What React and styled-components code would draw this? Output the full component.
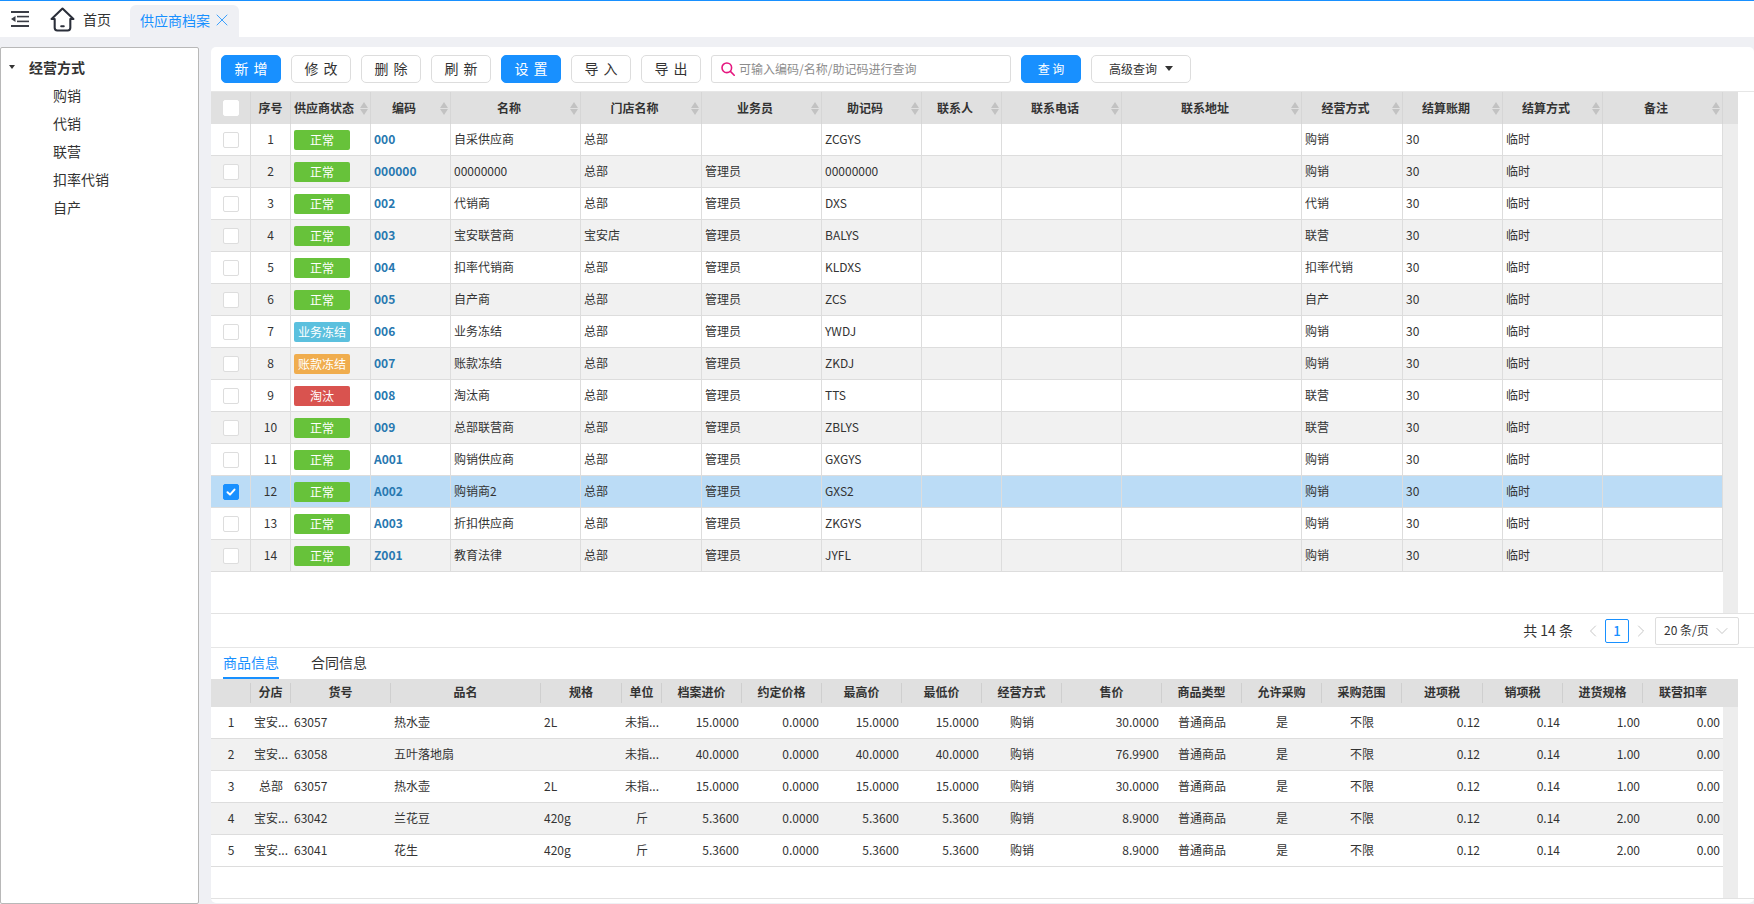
import React from "react";
import styled, { createGlobalStyle } from "styled-components";
import { X, ChevronLeft, ChevronRight, ChevronDown } from "lucide-react";

const GlobalStyle = createGlobalStyle`
  html, body {
    margin: 0;
    padding: 0;
    background: #eff0f4;
    font-family: "Noto Sans CJK SC", "Noto Sans", sans-serif;
    font-size: 12px;
    color: #333;
  }
  * {
    box-sizing: border-box;
  }
`;

// column tracks of both tables
const SUPPLIER_COLS = "40px 40px 80px 80px 130px 121px 120px 100px 80px 120px 180px 101px 100px 100px 120px";
const GOODS_COLS = "40px 40px 100px 150px 81px 40px 80px 80px 80px 80px 80px 100px 80px 80px 80px 81px 80px 80px 80px";

const Page = styled.div`
  width: 1754px;
  height: 904px;
  display: flex;
  flex-direction: column;
  overflow: hidden;
`;

const TopBar = styled.header`
  height: 37px;
  display: flex;
  align-items: center;
  background: #fff;
  border-top: 1px solid #1890ff;
`;

const MenuIcon = styled.svg`
  width: 18px;
  height: 16px;
  margin-left: 11px;
  fill: #3a3d45;
`;

const HomeIcon = styled.svg`
  width: 25px;
  height: 25px;
  margin-left: 21px;
  fill: none;
  stroke: #2b2f3a;
  stroke-width: 2;
  stroke-linejoin: round;
  stroke-linecap: round;
`;

const HomeLabel = styled.span`
  margin-left: 8px;
  font-size: 14px;
  width: 27px;
  white-space: nowrap;
`;

const ActiveTab = styled.div`
  align-self: flex-end;
  width: 109px;
  height: 32px;
  margin-left: 20px;
  padding: 0 0 2px 10px;
  display: flex;
  align-items: center;
  gap: 2px;
  background: #eff0f4;
  border-radius: 6px 6px 0 0;
  color: #1890ff;
  font-size: 14px;
  & > svg {
    flex: none;
  }
`;

const Body = styled.div`
  flex: 1;
  display: flex;
  padding-top: 10px;
  min-height: 0;
`;

const Sidebar = styled.aside`
  width: 199px;
  padding-top: 6px;
  background: #fff;
  border: 1px solid #b8b8b8;
  border-radius: 2px;
`;

const TreeHead = styled.div`
  height: 28px;
  display: flex;
  align-items: center;
  padding: 0 0 2px 8px;
  font-size: 14px;
  font-weight: 700;
  &::before {
    content: "";
    margin-right: 14px;
    border-left: 3.5px solid transparent;
    border-right: 3.5px solid transparent;
    border-top: 4px solid #333;
  }
`;

const TreeItem = styled.div`
  height: 28px;
  line-height: 26px;
  padding-left: 52px;
  font-size: 14px;
`;

const Main = styled.main`
  width: 1543px;
  height: 856px;
  margin-left: 12px;
  padding-top: 8px;
  background: #fff;
  border-radius: 5px;
`;

const Toolbar = styled.div`
  height: 36px;
  padding-left: 10px;
  display: flex;
  align-items: flex-start;
  gap: 10px;
`;

const Button = styled.button`
  width: ${(p) => p.$width || 60}px;
  height: 28px;
  padding: 0 0 2px;
  display: flex;
  align-items: center;
  justify-content: center;
  gap: 8px;
  font-family: inherit;
  font-size: ${(p) => p.$size || 14}px;
  word-spacing: ${(p) => (p.$size ? 0 : 2)}px;
  color: ${(p) => (p.$primary ? "#fff" : "#333")};
  background: ${(p) => (p.$primary ? "#1890ff" : "#fff")};
  border: 1px solid ${(p) => (p.$primary ? "#1890ff" : "#ddd")};
  border-radius: 5px;
  white-space: pre;
`;

const Caret = styled.i`
  border-left: 4px solid transparent;
  border-right: 4px solid transparent;
  border-top: 5px solid #333;
`;

const SearchBox = styled.label`
  width: 300px;
  height: 28px;
  padding-left: 9px;
  display: flex;
  align-items: center;
  gap: 4px;
  border: 1px solid #ddd;
  border-radius: 3px;
`;

const SearchIcon = styled.svg`
  width: 14px;
  height: 14px;
  flex: none;
  fill: none;
  stroke: #e5177f;
  stroke-width: 1.6;
  stroke-linecap: round;
`;

const SearchInput = styled.input`
  flex: 1;
  min-width: 0;
  border: 0;
  outline: 0;
  padding: 0 0 2px;
  font-family: inherit;
  font-size: 12px;
  &::placeholder {
    color: #8c8c8c;
    opacity: 1;
  }
`;

const GridArea = styled.section`
  height: ${(p) => p.$height}px;
  display: flex;
  border-top: ${(p) => (p.$lined ? "1px solid #e6e6e6" : "0")};
  border-bottom: 1px solid #e2e2e2;
`;

const Table = styled.div`
  width: 1512px;
  flex: none;
`;

const Scrollbar = styled.div`
  width: 15px;
  flex: none;
  background: #ededed;
  &::before {
    content: "";
    display: block;
    height: ${(p) => p.$head}px;
    background: #e0e0e0;
  }
`;

const HeadRow = styled.div`
  display: grid;
  grid-template-columns: ${(p) => p.$cols};
  height: ${(p) => p.$height}px;
  background: #e0e0e0;
`;

const SupplierHead = styled.div`
  display: flex;
  align-items: center;
  min-width: 0;
  font-weight: 700;
  border-right: 1px solid #d6d6d6;
`;

const GoodsHead = styled.div`
  display: flex;
  align-items: center;
  justify-content: center;
  font-weight: 700;
  &:not(:last-child) > span {
    border-right: 1px solid #cfcfcf;
  }
  & > span {
    width: 100%;
    height: 20px;
    line-height: 18px;
    text-align: center;
    white-space: nowrap;
  }
`;

const HeadLabel = styled.span`
  flex: 1;
  padding-bottom: 2px;
  text-align: center;
  white-space: nowrap;
`;

const Sorter = styled.i`
  width: 8px;
  margin: 0 2px 0 3px;
  flex: none;
  display: flex;
  flex-direction: column;
  gap: 1px;
  &::before,
  &::after {
    content: "";
    border-left: 4px solid transparent;
    border-right: 4px solid transparent;
  }
  &::before {
    border-bottom: 6px solid #c2c2c2;
  }
  &::after {
    border-top: 6px solid #c2c2c2;
  }
`;

const Row = styled.div`
  display: grid;
  grid-template-columns: ${(p) => p.$cols};
  height: 32px;
  border-bottom: 1px solid #ddd;
  background: ${(p) => (p.$selected ? "#bbdcf6" : p.$striped ? "#f1f1f1" : "#fff")};
`;

const Cell = styled.div`
  display: flex;
  align-items: center;
  justify-content: ${(p) => (p.$align === "center" ? "center" : p.$align === "right" ? "flex-end" : "flex-start")};
  min-width: 0;
  padding: 0 3px 2px;
  white-space: nowrap;
  overflow: hidden;
  border-right: ${(p) => (p.$plain ? "0" : "1px solid #ddd")};
`;

const Code = styled.span`
  font-weight: 700;
  color: #2878b0;
`;

const Checkbox = styled.span`
  width: 16px;
  height: 16px;
  margin-top: 2px;
  display: flex;
  align-items: center;
  justify-content: center;
  background: ${(p) => (p.$checked ? "#1890ff" : "#fff")};
  border: 1px solid ${(p) => (p.$checked ? "#1890ff" : "#ddd")};
  border-radius: 2px;
`;

const HeadCheckbox = styled(Checkbox)`
  margin: 0 auto;
  border-color: #fff;
`;

const CheckMark = styled.svg`
  width: 12px;
  height: 12px;
  fill: none;
  stroke: #fff;
  stroke-width: 2;
  stroke-linecap: round;
  stroke-linejoin: round;
`;

const STATUS_COLORS = {
  正常: "#67c23a",
  业务冻结: "#5bc0de",
  账款冻结: "#f0ad4e",
  淘汰: "#d9534f",
};

const StatusTag = styled.span`
  width: 56px;
  height: 20px;
  margin-top: 2px;
  padding-bottom: 1px;
  flex: none;
  display: flex;
  align-items: center;
  justify-content: center;
  color: #fff;
  background: ${(p) => STATUS_COLORS[p.$status]};
  border-radius: 2px;
`;

const Pager = styled.div`
  height: 34px;
  padding-right: 15px;
  display: flex;
  align-items: center;
  justify-content: flex-end;
  border-bottom: 1px solid #e6e6e6;
  font-size: 14px;
`;

const Total = styled.span`
  margin-right: 14px;
  padding-bottom: 2px;
`;

const PageArrow = styled.span`
  width: 12px;
  display: flex;
  justify-content: center;
  color: #bbb;
  & > svg {
    flex: none;
  }
`;

const PageNum = styled.span`
  width: 24px;
  height: 24px;
  margin: 0 6px;
  display: flex;
  align-items: center;
  justify-content: center;
  color: #1890ff;
  font-size: 13px;
  font-weight: 500;
  border: 1px solid #1890ff;
  border-radius: 2px;
`;

const PageSize = styled.div`
  width: 84px;
  height: 28px;
  margin-left: 8px;
  padding: 0 6px 0 8px;
  display: flex;
  align-items: center;
  justify-content: space-between;
  font-size: 12px;
  color: #bbb;
  border: 1px solid #ddd;
  border-radius: 2px;
  & > span {
    color: #333;
    padding-bottom: 2px;
  }
  & > svg {
    flex: none;
  }
`;

const TabBar = styled.nav`
  height: 31px;
  padding-left: 12px;
  display: flex;
  gap: 32px;
  font-size: 14px;
`;

const DetailTab = styled.span`
  height: 31px;
  line-height: 29px;
  color: ${(p) => (p.$active ? "#1890ff" : "#333")};
  border-bottom: 2px solid ${(p) => (p.$active ? "#1890ff" : "transparent")};
`;

const SUPPLIERS = [
  ["000", "自采供应商", "总部", "", "ZCGYS", "购销", "正常"],
  ["000000", "00000000", "总部", "管理员", "00000000", "购销", "正常"],
  ["002", "代销商", "总部", "管理员", "DXS", "代销", "正常"],
  ["003", "宝安联营商", "宝安店", "管理员", "BALYS", "联营", "正常"],
  ["004", "扣率代销商", "总部", "管理员", "KLDXS", "扣率代销", "正常"],
  ["005", "自产商", "总部", "管理员", "ZCS", "自产", "正常"],
  ["006", "业务冻结", "总部", "管理员", "YWDJ", "购销", "业务冻结"],
  ["007", "账款冻结", "总部", "管理员", "ZKDJ", "购销", "账款冻结"],
  ["008", "淘汰商", "总部", "管理员", "TTS", "联营", "淘汰"],
  ["009", "总部联营商", "总部", "管理员", "ZBLYS", "联营", "正常"],
  ["A001", "购销供应商", "总部", "管理员", "GXGYS", "购销", "正常"],
  ["A002", "购销商2", "总部", "管理员", "GXS2", "购销", "正常"],
  ["A003", "折扣供应商", "总部", "管理员", "ZKGYS", "购销", "正常"],
  ["Z001", "教育法律", "总部", "管理员", "JYFL", "购销", "正常"],
];

const SUPPLIER_HEADS = ["供应商状态", "编码", "名称", "门店名称", "业务员", "助记码", "联系人", "联系电话", "联系地址", "经营方式", "结算账期", "结算方式", "备注"];

const GOODS_HEADS = ["", "分店", "货号", "品名", "规格", "单位", "档案进价", "约定价格", "最高价", "最低价", "经营方式", "售价", "商品类型", "允许采购", "采购范围", "进项税", "销项税", "进货规格", "联营扣率"];

// 单元格对齐, same order as GOODS_HEADS
const GOODS_ALIGN = ["center", "center", "left", "left", "left", "center", "right", "right", "right", "right", "center", "right", "center", "center", "center", "right", "right", "right", "right"];

const GOODS = [
  ["1", "宝安...", "63057", "热水壶", "2L", "未指...", "15.0000", "0.0000", "15.0000", "15.0000", "购销", "30.0000", "普通商品", "是", "不限", "0.12", "0.14", "1.00", "0.00"],
  ["2", "宝安...", "63058", "五叶落地扇", "", "未指...", "40.0000", "0.0000", "40.0000", "40.0000", "购销", "76.9900", "普通商品", "是", "不限", "0.12", "0.14", "1.00", "0.00"],
  ["3", "总部", "63057", "热水壶", "2L", "未指...", "15.0000", "0.0000", "15.0000", "15.0000", "购销", "30.0000", "普通商品", "是", "不限", "0.12", "0.14", "1.00", "0.00"],
  ["4", "宝安...", "63042", "兰花豆", "420g", "斤", "5.3600", "0.0000", "5.3600", "5.3600", "购销", "8.9000", "普通商品", "是", "不限", "0.12", "0.14", "2.00", "0.00"],
  ["5", "宝安...", "63041", "花生", "420g", "斤", "5.3600", "0.0000", "5.3600", "5.3600", "购销", "8.9000", "普通商品", "是", "不限", "0.12", "0.14", "2.00", "0.00"],
];

const SupplierRow = ({ index, supplier }) => {
  const [code, name, store, staff, mnemonic, mode, status] = supplier;
  const selected = code === "A002";
  return (
    <Row $cols={SUPPLIER_COLS} $striped={index % 2 === 1} $selected={selected}>
      <Cell $align="center">
        <Checkbox $checked={selected}>
          {selected && (
            <CheckMark viewBox="0 0 12 12">
              <path d="M2.5 6.2 5 8.6 9.5 3.6" />
            </CheckMark>
          )}
        </Checkbox>
      </Cell>
      <Cell $align="center">{index + 1}</Cell>
      <Cell>
        <StatusTag $status={status}>{status}</StatusTag>
      </Cell>
      <Cell>
        <Code>{code}</Code>
      </Cell>
      <Cell>{name}</Cell>
      <Cell>{store}</Cell>
      <Cell>{staff}</Cell>
      <Cell>{mnemonic}</Cell>
      <Cell />
      <Cell />
      <Cell />
      <Cell>{mode}</Cell>
      <Cell>30</Cell>
      <Cell>临时</Cell>
      <Cell />
    </Row>
  );
};

const App = () => {
  return (
    <Page>
      <GlobalStyle />
      <TopBar>
        <MenuIcon viewBox="0 0 18 16">
          <rect x="0" y="0" width="18" height="2" />
          <rect x="6" y="4.8" width="12" height="1.6" />
          <rect x="6" y="9.6" width="12" height="1.6" />
          <rect x="0" y="14" width="18" height="2" />
          <polygon points="0,8 4.5,5 4.5,11" />
        </MenuIcon>
        <HomeIcon viewBox="0 0 24 24">
          <path d="M1.5 11.5 12 1.5l10.5 10h-3V20a2.5 2.5 0 0 1-2.5 2.5H7A2.5 2.5 0 0 1 4.5 20v-8.5z" />
          <path d="M10.8 18.5h2.4" />
        </HomeIcon>
        <HomeLabel>首页</HomeLabel>
        <ActiveTab>
          供应商档案
          <X size={20} strokeWidth={1} />
        </ActiveTab>
      </TopBar>
      <Body>
        <Sidebar>
          <TreeHead>经营方式</TreeHead>
          <TreeItem>购销</TreeItem>
          <TreeItem>代销</TreeItem>
          <TreeItem>联营</TreeItem>
          <TreeItem>扣率代销</TreeItem>
          <TreeItem>自产</TreeItem>
        </Sidebar>
        <Main>
          <Toolbar>
            <Button $primary>新 增</Button>
            <Button>修 改</Button>
            <Button>删 除</Button>
            <Button>刷 新</Button>
            <Button $primary>设 置</Button>
            <Button>导 入</Button>
            <Button>导 出</Button>
            <SearchBox>
              <SearchIcon viewBox="0 0 14 14">
                <circle cx="5.8" cy="5.8" r="4.8" />
                <path d="m9.4 9.4 3.8 3.8" />
              </SearchIcon>
              <SearchInput placeholder="可输入编码/名称/助记码进行查询" />
            </SearchBox>
            <Button $primary $size={12}>查 询</Button>
            <Button $width={100} $size={12}>
              高级查询
              <Caret />
            </Button>
          </Toolbar>
          <GridArea $height={523} $lined>
            <Table>
              <HeadRow $cols={SUPPLIER_COLS} $height={32}>
                <SupplierHead>
                  <HeadCheckbox />
                </SupplierHead>
                <SupplierHead>
                  <HeadLabel>序号</HeadLabel>
                </SupplierHead>
                {SUPPLIER_HEADS.map((title) => (
                  <SupplierHead key={title}>
                    <HeadLabel>{title}</HeadLabel>
                    <Sorter />
                  </SupplierHead>
                ))}
              </HeadRow>
              {SUPPLIERS.map((supplier, i) => (
                <SupplierRow key={supplier[0]} index={i} supplier={supplier} />
              ))}
            </Table>
            <Scrollbar $head={32} />
          </GridArea>
          <Pager>
            <Total>共 14 条</Total>
            <PageArrow>
              <ChevronLeft size={20} strokeWidth={1} />
            </PageArrow>
            <PageNum>1</PageNum>
            <PageArrow>
              <ChevronRight size={20} strokeWidth={1} />
            </PageArrow>
            <PageSize>
              <span>20 条/页</span>
              <ChevronDown size={20} strokeWidth={1} />
            </PageSize>
          </Pager>
          <TabBar>
            <DetailTab $active>商品信息</DetailTab>
            <DetailTab>合同信息</DetailTab>
          </TabBar>
          <GridArea $height={220}>
            <Table>
              <HeadRow $cols={GOODS_COLS} $height={28}>
                {GOODS_HEADS.map((title, i) => (
                  <GoodsHead key={i}>
                    <span>{title}</span>
                  </GoodsHead>
                ))}
              </HeadRow>
              {GOODS.map((goods, i) => (
                <Row key={goods[0]} $cols={GOODS_COLS} $striped={i % 2 === 1}>
                  {goods.map((value, j) => (
                    <Cell key={j} $plain $align={GOODS_ALIGN[j]}>
                      {value}
                    </Cell>
                  ))}
                </Row>
              ))}
            </Table>
            <Scrollbar $head={28} />
          </GridArea>
        </Main>
      </Body>
    </Page>
  );
};

export default App;
